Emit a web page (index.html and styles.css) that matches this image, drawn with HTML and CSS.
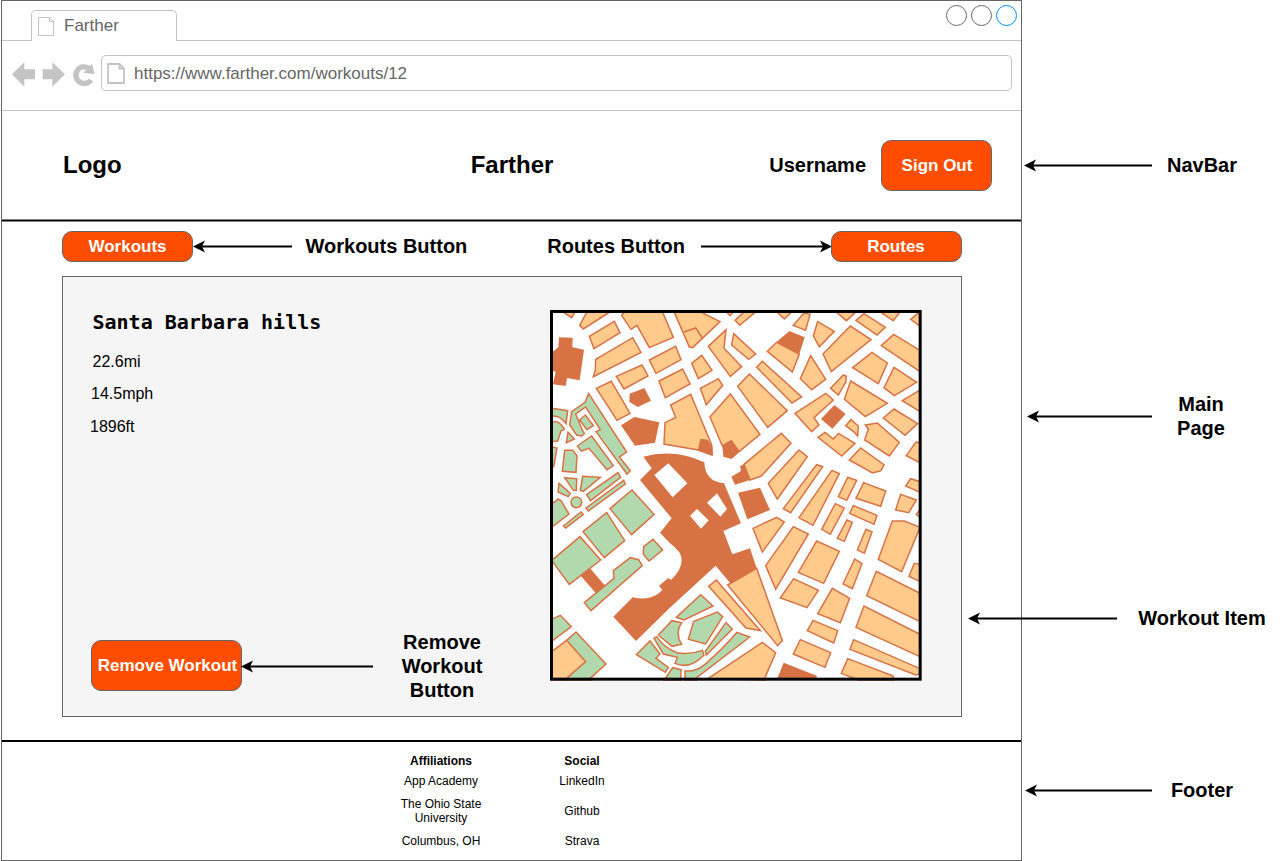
FILE: index.html
```html
<!DOCTYPE html>
<html lang="en">
<head>
<meta charset="utf-8">
<title>Farther</title>
<link rel="stylesheet" href="styles.css">
</head>
<body>
<div class="board">
  <div class="browser">
    <div class="tabstrip">
      <div class="tab">
        <svg class="tab-doc" width="17" height="20" viewBox="0 0 17 20"><path d="M.5 .5H11.5L15.5 4.5V18.5H.5ZM11.5 .5V4.5H15.5"/></svg>
        <span>Farther</span>
      </div>
      <div class="dots"><i class="dot"></i><i class="dot"></i><i class="dot dot-blue"></i></div>
    </div>
    <div class="toolbar">
      <svg class="history" width="84" height="30" viewBox="36 180 252 90">
        <path d="M36 223L73 187V208H105V238H73V260ZM195 223L157 187V208H128V238H157V260ZM276 191L284 223L250 218Z"/>
        <path class="reload" d="M273 240A25 25 0 1 1 267 205"/>
      </svg>
      <div class="address">
        <svg class="url-doc" width="18" height="21" viewBox="0 0 18 21"><path d="M1 1H12.500L17 5.500V20H1ZM12.500 1V5.500H17"/></svg>
        <span class="url">https://www.farther.com/workouts/12</span>
      </div>
    </div>

    <header class="navbar">
      <div class="logo">Logo</div>
      <div class="brand">Farther</div>
      <div class="account"><span class="username">Username</span><button class="btn btn-signout">Sign Out</button></div>
    </header>
    <div class="rule"></div>

    <main class="main">
      <div class="actions">
        <button class="btn btn-small">Workouts</button>
        <svg class="arrow" width="99" height="13"><path d="M0 6.500L12 .5L9 6.500L12 12.500Z"/><path d="M8 5.500H99V7.500H8Z"/></svg>
        <span class="label label-workouts">Workouts Button</span>
        <span class="label label-routes">Routes Button</span>
        <svg class="arrow arrow-routes" width="131" height="13"><path d="M131 6.500L119 .5L122 6.500L119 12.500Z"/><path d="M0 5.500H123V7.500H0Z"/></svg>
        <button class="btn btn-small btn-routes">Routes</button>
      </div>

      <section class="card">
        <div class="details">
          <h2 class="title">Santa Barbara hills</h2>
          <p class="stat distance">22.6mi</p>
          <p class="stat speed">14.5mph</p>
          <p class="stat climb">1896ft</p>
          <div class="remove-row">
            <button class="btn btn-remove">Remove Workout</button>
            <svg class="arrow arrow-remove" width="132" height="13"><path d="M0 6.500L12 .5L9 6.500L12 12.500Z"/><path d="M8 5.500H132V7.500H8Z"/></svg>
            <span class="label label-remove">Remove<br>Workout<br>Button</span>
          </div>
        </div>

        <svg class="map" width="372" height="371" viewBox="15 15 1116 1113">
          <rect x="20" y="20" width="1104" height="1102" fill="#fff"/>
          <g>
            <g class="block">
              <path d="M52 20L80 38L90 20ZM124 24L104 61L115 72L190 24L190 15H128ZM133 94L208 49L225 83L147 131ZM152 163L263 98L288 142L145 215L151 195ZM230 31L258 73L276 61L313 128L385 97L354 24V18H240ZM313 165L392 124L408 164L333 205ZM214 214L291 180L309 213L237 252ZM342 228L413 192L435 237L361 278ZM154 250L199 229L255 325L216 346Z"/>
              <path d="M377 300L437 268L500 420L502 450L460 435L357 417L360 353L392 337Z"/>
            </g>
            <g class="dark"><path d="M42 97L83 98L82 127L117 134L104 226L66 219L62 243L24 238L32 200L24 198V140L40 127ZM254 266L298 249L318 287L279 306L253 291ZM228 361L268 336L343 352L330 413L270 422Z"/></g>
            <g class="park">
              <path d="M20 310L68 317L63 356Q45 330 20 333ZM20 352Q40 342 58 372L48 378L38 408L20 410Z"/>
              <path d="M131 266L245 441L223 456L256 497L246 507L153 380L166 374L122 306L92 327L112 375L118 386L110 393L95 390L74 360L80 320L120 292ZM104 345L121 330L145 362L126 374Z"/>
            </g>
          </g>
          <g transform="translate(0 375)">
            <g class="park">
              <path d="M20 50L36 54L26 110H20ZM69 7L88 27L64 38ZM59 61H83L96 77L93 127L52 124ZM97 48L140 18L205 107L186 119L132 55L109 63ZM59 143L95 146L94 181H85ZM113 139L166 142L115 184L106 181ZM42 160L76 190L70 200L39 186ZM20 223L39 207L48 212L72 252L20 292ZM125 194L219 128L227 142L137 212ZM123 234L236 151L241 162L130 243ZM55 288L108 246L115 253L62 294ZM195 236L261 180L327 253L260 314ZM114 305L185 248L239 332L178 383ZM20 391L105 320L167 390L73 463ZM296 350L324 328L353 360L312 393L295 373Z"/>
              <circle cx="94" cy="217" r="16"/>
            </g>
            <path class="dark" d="M295 80Q390 55 478 97Q480 155 537 160L588 280L535 303L562 373L615 355L635 415L556 460L512 407L373 535L273 633L205 560L263 502Q320 515 352 480L342 467L370 444L378 450Q410 420 410 390Q410 365 375 340L345 308L380 265L285 150L320 115Z"/>
            <path fill="#fff" d="M328 135L370 100L427 160L383 202ZM486 218L516 190L546 237L526 260ZM435 257L456 237L491 271L468 296Z"/>
          </g>
          <g transform="translate(375 0)">
            <g class="block">
              <path d="M12 20L58 126L68 128L150 50L98 24V18ZM195 46L223 20H258L209 61ZM168 20L180 32L190 20ZM115 124L168 74L162 130L215 185L181 214ZM191 86L257 147L236 163L185 120ZM65 175L95 151L126 196L85 221ZM91 250L145 221L158 241L109 299ZM203 244L238 207L352 317L293 367ZM260 187L277 169L395 276L366 294ZM320 20L343 42L366 20ZM370 61L402 24L420 28L407 76ZM292 139L320 112L388 147L367 201ZM120 336L181 267L270 388L207 440L184 407L157 423Z"/>
              <path d="M42 81L77 69L97 99"/>
            </g>
            <path class="dark" d="M319 112L358 78L404 97L388 147Z"/>
          </g>
          <g transform="translate(375 375)">
            <g class="block">
              <path d="M222 103L334 10L363 40L274 138L240 150ZM295 160L387 60L412 80L322 207ZM340 236L440 104L458 110L362 248ZM249 295L320 262L343 276L277 366ZM287 407L370 290L415 312L317 478Z"/>
            </g>
            <path class="dark" d="M83 62L91 26L113 29L127 52L126 77ZM157 47L184 31L209 65L185 87L160 80ZM184 140L213 123L210 108L222 103L240 150L195 164ZM204 188L270 173L300 240L232 268Z"/>
          </g>
          <g transform="translate(750 0)">
            <g class="block">
              <path d="M123 20L154 47L184 20ZM183 46L207 26L271 67L246 90ZM254 20L295 47L315 20ZM347 43L375 20V64ZM68 50L118 79L73 125L55 93ZM84 147L166 63L228 104L109 200ZM259 122L296 88L375 136V200ZM16 221L47 152L92 223L50 254ZM173 188L231 142L277 174L250 236ZM297 187L365 232L298 272L267 248ZM107 250L145 210L154 214L152 232L130 270ZM167 228L277 295L211 335L148 283ZM322 287L375 255V320ZM265 339L297 312L368 356L330 391ZM152 362L168 344L190 363L188 393L176 380ZM211 360L247 354L313 412L283 453L209 405L220 372ZM0 325L92 265L115 285L57 338L72 360L50 380Z"/>
            </g>
            <path class="dark" d="M78 342L118 300L152 327L112 371Z"/>
          </g>
          <g class="block" transform="translate(750 375)">
            <path d="M69 22L90 7L115 27L131 10L180 40L140 78ZM163 90L197 54L267 104L258 122L233 129ZM334 77L363 36L375 38V98ZM12 263L111 121L133 131L54 286ZM158 142L185 151L155 211L130 200ZM206 158L272 183L257 229L183 205ZM80 298L121 221L148 234L106 313ZM175 227L246 256L237 283L164 250ZM127 325L156 270L172 277L148 334ZM187 360L213 298L231 306L208 370ZM332 168L347 146L375 155V187ZM317 193L364 210L341 248L302 240ZM364 254L375 238V260ZM250 388L292 273H328L375 292L320 425ZM65 333L133 364L86 460L10 427Z"/>
          </g>
          <g transform="translate(0 750)">
            <path class="dark" d="M107 62L134 38L180 92L153 115Z"/>
            <g class="park"><path d="M118 143L207 70L205 47L256 8L281 14L292 32L138 167ZM20 193L46 181L79 215L20 259ZM65 256L93 231L183 327L138 368V375H65ZM274 299L315 258L345 297L333 310L370 337L361 352ZM340 240L381 197L410 203Q388 235 410 268L381 274Z"/></g>
            <path class="block" d="M20 290L65 256L122 320L67 368V375H20Z"/>
          </g>
          <g transform="translate(375 750)">
            <g class="park">
              <path d="M19 187L92 119L129 153L42 195ZM71 199L142 171L158 185L107 267L55 253ZM168 203L187 222L109 300L106 289ZM45 348Q80 350 105 328Q160 280 201 232L239 246L80 368V375H45ZM-48 250L-40 245Q-15 280 20 293Q60 300 97 286L102 300Q60 345 15 325L22 307L-20 297ZM-17 375L8 338L33 344L32 375Z"/>
            </g>
            <path class="block" d="M116 94L139 75L271 227L228 219ZM173 90L260 40L337 257L323 272ZM114 371L277 262L317 293L285 368V375ZM331 129L371 71L445 106L411 158Z"/>
            <path class="dark" d="M323 368L341 323L440 362V372H320Z"/>
          </g>
          <g class="block" transform="translate(750 750)">
            <path d="M-5 297L16 254L107 293L90 337ZM144 87L179 12L201 26L172 101ZM68 176L112 100L164 130L136 203ZM342 64L358 25L375 28V80ZM215 122L244 49L375 115V200ZM183 217L207 153L375 238V305ZM165 283L176 254L375 341V356L362 360ZM37 227L54 196L128 227L116 264ZM139 355L158 311L295 363V375H190Z"/>
          </g>
          <rect class="frame" x="19.500" y="19.500" width="1106" height="1103"/>
        </svg>
      </section>
    </main>
    <div class="rule rule-footer"></div>

    <footer class="footer">
      <b>Affiliations</b><b>Social</b>
      <span>App Academy</span><span>LinkedIn</span>
      <span>The Ohio State<br>University</span><span>Github</span>
      <span>Columbus, OH</span><span>Strava</span>
    </footer>
  </div>

  <aside class="notes">
    <div class="note note-nav"><svg class="arrow" width="128" height="13"><path d="M0 6.500L12 .5L9 6.500L12 12.500Z"/><path d="M8 5.500H128V7.500H8Z"/></svg><span class="label">NavBar</span></div>
    <div class="note note-main"><svg class="arrow" width="125" height="13"><path d="M0 6.500L12 .5L9 6.500L12 12.500Z"/><path d="M8 5.500H125V7.500H8Z"/></svg><span class="label">Main<br>Page</span></div>
    <div class="note note-item"><svg class="arrow" width="149" height="13"><path d="M0 6.500L12 .5L9 6.500L12 12.500Z"/><path d="M8 5.500H149V7.500H8Z"/></svg><span class="label">Workout Item</span></div>
    <div class="note note-footer"><svg class="arrow" width="127" height="13"><path d="M0 6.500L12 .5L9 6.500L12 12.500Z"/><path d="M8 5.500H127V7.500H8Z"/></svg><span class="label">Footer</span></div>
  </aside>
</div>
</body>
</html>
```
FILE: styles.css
```css
* { box-sizing: border-box; }
body {
  margin: 0;
  background: #fff;
  color: #000;
  font-family: "Liberation Sans", Arial, sans-serif;
  overflow: hidden;
}
svg { display: block; flex: none; }
.board { display: flex; width: 1287px; height: 861px; padding-left: 1px; }
.browser {
  display: flex;
  flex-direction: column;
  flex: none;
  width: 1021px;
  height: 861px;
  border: 1px solid #666;
}

/* Browser chrome */
.tabstrip {
  display: flex;
  justify-content: space-between;
  height: 40px;
  padding: 9px 4px 0 29px;
  border-bottom: 1px solid #c4c4c4;
}
.tab {
  display: flex;
  align-items: center;
  width: 146px;
  height: 31px;
  padding: 0 0 0 6px;
  gap: 9px;
  border: 1px solid #c4c4c4;
  border-bottom: 0;
  border-radius: 5px 5px 0 0;
  background: #fff;
  color: #666;
  font-size: 17px;
  line-height: 20px;
}
.tab-doc { margin-top: 1px; fill: none; stroke: #c4c4c4; }
.dots { display: flex; gap: 4px; margin-top: -5px; }
.dot { width: 21px; height: 21px; border: 1px solid #666; border-radius: 50%; }
.dot-blue { border-color: #008cff; }
.toolbar {
  display: flex;
  height: 70px;
  padding: 14px 9px 0 10px;
  gap: 5px;
  border-bottom: 1px solid #c4c4c4;
}
.history { margin-top: 5px; fill: #c4c4c4; }
.history .reload { fill: none; stroke: #c4c4c4; stroke-width: 16; }
.address {
  display: flex;
  flex: 1;
  align-items: center;
  height: 36px;
  padding: 0 5px;
  gap: 9px;
  border: 1px solid #c4c4c4;
  border-radius: 5px;
  color: #666;
  font-size: 17px;
  line-height: 20px;
}
.url { padding-top: 2px; }
.url-doc { fill: none; stroke: #c4c4c4; stroke-width: 1.8; }

/* Navigation */
.navbar {
  display: grid;
  grid-template-columns: 1fr auto 1fr;
  align-items: center;
  height: 108px;
  padding: 1px 29px 0 61px;
  font-size: 24px;
  font-weight: bold;
}
.logo, .brand { padding-bottom: 2px; }
.brand { margin-left: -31px; }
.account { display: flex; align-items: center; justify-content: flex-end; gap: 15px; }
.username { font-size: 20px; }
.rule {
  flex: none;
  height: 3px;
  border: 1px solid #808080;
  border-width: 1px 0;
  background: #000;
}
.rule-footer { height: 2px; border: 0; margin-top: 1px; }
.btn {
  flex: none;
  padding: 0;
  border: 1px solid #666;
  border-radius: 10px;
  background: #ff4d00;
  color: #fff;
  font: bold 17px/20px "Liberation Sans", Arial, sans-serif;
  white-space: nowrap;
}
.btn-signout { width: 111px; height: 51px; padding-left: 1px; }
.btn-small { width: 131px; height: 31px; }
.btn-routes { padding-right: 1px; }
.btn-remove { width: 151px; height: 51px; padding-left: 2px; }
.label { padding-bottom: 2px; font-size: 20px; font-weight: bold; line-height: 24px; text-align: center; white-space: nowrap; }
.arrow { fill: #000; }

/* Workout */
.main { height: 517px; padding: 9px 59px 0 60px; }
.actions { display: flex; align-items: center; height: 31px; }
.label-workouts { margin-left: 13.5px; }
.label-routes { margin-left: auto; }
.arrow-routes { margin: 0 -1px 0 16px; }
.card {
  display: flex;
  justify-content: space-between;
  align-items: flex-start;
  width: 900px;
  height: 441px;
  margin-top: 14px;
  padding: 33px 39px 0 28px;
  border: 1px solid #666;
  background: #f5f5f5;
}
.details { display: flex; flex-direction: column; width: 400px; height: 392px; }
.title {
  margin: 0 0 18px 1.5px;
  font: bold 20px/24px "DejaVu Sans Mono", monospace;
}
.stat { margin: 0; font-size: 16px; line-height: 20px; }
.distance { padding-left: 1.5px; }
.speed { margin-top: 12px; }
.climb { margin: 13px 0 0 -1px; }
.remove-row { display: flex; align-items: center; height: 73px; margin-top: auto; }
.arrow-remove { margin: 1px 0 0 -1px; }
.label-remove { width: 82px; margin-left: 28px; padding-bottom: 0; }
.block { fill: #ffca8c; stroke: #d77245; stroke-width: 4.5; }
.park { fill: #b2d8ae; stroke: #d77245; stroke-width: 4.5; }
.dark { fill: #d77245; }
.frame { fill: none; stroke: #000; stroke-width: 9; }

/* Footer */
.footer {
  display: grid;
  grid-template-columns: 141px 141px;
  grid-template-rows: 20px 20px 40px 20px;
  justify-content: center;
  align-items: center;
  padding-top: 9px;
  font-size: 12px;
  line-height: 14px;
  text-align: center;
}

/* Annotations */
.notes { width: 265px; padding-top: 153px; }
.note { display: flex; align-items: center; height: 25px; margin-left: 2px; }
.note .label { width: 80px; margin-left: 10px; }
.note-main { height: 49px; margin: 214px 0 0 5px; }
.note-main .label { margin-left: 9px; }
.note-item { position: relative; margin: 165px 0 0 -54px; }
.note-item .label { width: 130px; margin-left: 20px; }
.note-footer { margin: 147px 0 0 3px; }
```
